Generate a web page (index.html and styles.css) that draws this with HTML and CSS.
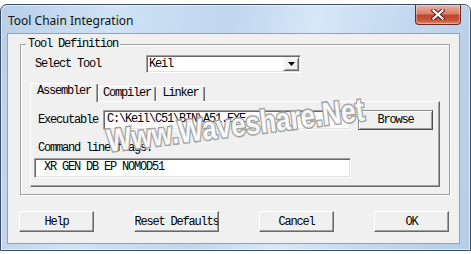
FILE: index.html
```html
<!DOCTYPE html>
<html>
<head>
<meta charset="utf-8">
<link rel="stylesheet" href="styles.css">
</head>
<body>
<div class="window">
  <div class="titlebar">
    <span class="title">Tool Chain Integration</span>
    <div class="close">
      <svg width="14" height="11" viewBox="0 0 14 11">
        <path d="M2.5 1.5 L11.5 9.5 M11.5 1.5 L2.5 9.5" stroke="#5a2018" stroke-width="4.2" stroke-linecap="square" fill="none"/>
        <path d="M2.5 1.5 L11.5 9.5 M11.5 1.5 L2.5 9.5" stroke="#ffffff" stroke-width="2.2" stroke-linecap="square" fill="none"/>
      </svg>
    </div>
  </div>
  <div class="client">
    <div class="group">
      <span class="legend">Tool Definition</span>
      <div class="select-row">
        <span class="lbl sel-lbl">Select Tool</span>
        <div class="combo">
          <span class="combo-text">Keil</span>
          <span class="drop">
            <svg width="7" height="4" viewBox="0 0 7 4"><path d="M0 0 H7 L3.5 4 Z" fill="#000"/></svg>
          </span>
        </div>
      </div>
      <div class="tabs">
        <div class="tab active tab-asm">Assembler</div>
        <div class="tab tab-cmp">Compiler</div>
        <div class="tab tab-lnk">Linker</div>
      </div>
      <div class="panel">
        <div class="exe-row">
          <span class="lbl exe-lbl">Executable</span>
          <div class="edit exe-edit">C:\Keil\C51\BIN\A51.EXE</div>
          <div class="btn browse">Browse</div>
        </div>
        <div class="lbl flags-lbl">Command line flags:</div>
        <div class="edit flags-edit">&nbsp;XR GEN DB EP NOMOD51</div>
      </div>
    </div>
    <div class="buttons">
      <div class="btn btn-std">Help</div>
      <div class="btn btn-reset">Reset Defaults</div>
      <div class="btn btn-std">Cancel</div>
      <div class="btn btn-std">OK</div>
    </div>
  </div>
  <div class="watermark">Www.Waveshare.Net</div>
</div>
</body>
</html>
```
FILE: styles.css
```css
* { box-sizing: border-box; }
html, body { margin: 0; padding: 0; background: #ffffff; }
body { padding-top: 4px; width: 471px; height: 254px; overflow: hidden; }

.window {
  position: relative;
  width: 471px;
  height: 247px;
  border: 1px solid #3c4e63;
  border-radius: 7px 7px 0 0;
  padding: 0 10px 6px 6px;
  background: linear-gradient(100deg, #b8cfe8 0%, #cfe2f6 22%, #c0d6ee 45%, #d6e7f8 62%, #c3d8ef 80%, #b5cde7 100%);
  box-shadow: inset 0 0 0 1px rgba(255,255,255,0.55);
  display: flex;
  flex-direction: column;
}

.titlebar {
  height: 28px;
  display: flex;
  align-items: center;
  padding: 2px 0 0 1px;
}
.title {
  font-family: "Noto Sans", "Open Sans", sans-serif;
  font-size: 12px;
  color: #111;
}
.close {
  position: absolute;
  top: 0;
  right: 9px;
  width: 46px;
  height: 20px;
  border: 1px solid #6a2a20;
  border-top: none;
  border-radius: 0 0 4px 4px;
  background: linear-gradient(180deg, #eab3a5 0%, #d9826c 45%, #c3452e 55%, #c8533a 80%, #dd8a70 100%);
  box-shadow: inset 0 0 0 1px rgba(255,255,255,0.35);
  display: flex;
  align-items: center;
  justify-content: center;
}

.client {
  width: 453px;
  height: 211px;
  border: 1px solid #8fa3ba;
  background: #f0f0f0;
  display: flex;
  flex-direction: column;
  font-family: "Liberation Mono", monospace;
  font-size: 12px;
  letter-spacing: -1.2px;
  color: #000;
}

.group {
  position: relative;
  margin: 10px 0 0 12px;
  width: 430px;
  height: 151px;
  border: 1px solid #a0a0a0;
  box-shadow: inset 1px 1px 0 #fff, 1px 1px 0 #fff;
  padding: 10px 0 0 0;
}
.legend {
  position: absolute;
  top: -7px;
  left: 5px;
  padding: 0 2px;
  background: #f0f0f0;
  line-height: 12px;
}

.lbl { line-height: 12px; white-space: nowrap; }

.select-row {
  display: flex;
  align-items: center;
  height: 18px;
}
.sel-lbl { width: 125px; padding-left: 14px; }

.combo {
  width: 155px;
  height: 18px;
  border: 1px solid;
  border-color: #a0a0a0 #ffffff #ffffff #a0a0a0;
  box-shadow: inset 1px 1px 0 #696969, inset -1px -1px 0 #e3e3e3;
  background: #fff;
  display: flex;
  align-items: center;
  padding: 0 1px 0 2px;
}
.combo-text { flex: 1; line-height: 12px; }
.drop {
  width: 16px;
  height: 14px;
  background: #f0f0f0;
  border: 1px solid;
  border-color: #f0f0f0 #696969 #696969 #f0f0f0;
  box-shadow: inset 1px 1px 0 #fff, inset -1px -1px 0 #a0a0a0;
  display: flex;
  align-items: center;
  justify-content: center;
}

.tabs {
  display: flex;
  align-items: flex-end;
  height: 18px;
  margin: 10px 0 0 9px;
  position: relative;
  z-index: 1;
}
.tab {
  height: 15px;
  line-height: 13px;
  text-align: center;
  border-top: 1px solid #fff;
  border-left: 1px solid #fff;
  border-right: 1px solid #696969;
  box-shadow: inset -1px 0 0 #a0a0a0;
  border-radius: 2px 2px 0 0;
  background: #f0f0f0;
}
.tab.active {
  height: 19px;
  line-height: 15px;
  margin-bottom: -1px;
}
.tab-asm { width: 68px; }
.tab-cmp { width: 58px; }
.tab-lnk { width: 49px; }

.panel {
  margin: 0 9px;
  height: 86px;
  border-top: 1px solid #fff;
  border-left: 1px solid #fff;
  border-right: 1px solid #696969;
  border-bottom: 1px solid #696969;
  box-shadow: inset -1px -1px 0 #a0a0a0;
  padding: 8px 0 0 3px;
}

.exe-row {
  display: flex;
  align-items: center;
  height: 20px;
}
.exe-lbl { width: 69px; padding-left: 4px; }

.edit {
  height: 20px;
  border: 1px solid;
  border-color: #a0a0a0 #ffffff #ffffff #a0a0a0;
  box-shadow: inset 1px 1px 0 #696969, inset -1px -1px 0 #e3e3e3;
  background: #fff;
  line-height: 17px;
  padding-left: 3px;
  white-space: pre;
  overflow: hidden;
}
.exe-edit { width: 248px; }
.flags-lbl { margin-top: 12px; padding-left: 4px; }
.flags-edit { width: 317px; margin-top: 4px; padding-left: 3px; }

.btn {
  height: 21px;
  background: #f0f0f0;
  border: 1px solid;
  border-color: #ffffff #696969 #696969 #ffffff;
  box-shadow: inset -1px -1px 0 #a0a0a0;
  display: flex;
  align-items: center;
  justify-content: center;
  white-space: nowrap;
  overflow: hidden;
}
.browse {
  width: 75px;
  height: 20px;
  margin-left: 7px;
  border-color: #8a8a8a #4a4a4a #4a4a4a #8a8a8a;
  box-shadow: inset 1px 1px 0 #fff, inset -1px -1px 0 #a0a0a0;
}

.buttons {
  display: flex;
  gap: 40px;
  margin: 16px 0 0 11px;
}
.btn-std { width: 75px; }
.btn-reset { width: 85px; }

.watermark {
  position: absolute;
  left: 0;
  right: 0;
  top: 104px;
  text-align: center;
  font-family: "Liberation Sans", Arial, sans-serif;
  font-weight: bold;
  font-size: 32px;
  line-height: 32px;
  color: rgba(255,255,255,0.92);
  -webkit-text-stroke: 3px #a3a3a3;
  paint-order: stroke fill;
  transform: rotate(-7deg) scaleX(0.82);
  pointer-events: none;
  white-space: nowrap;
}
```
